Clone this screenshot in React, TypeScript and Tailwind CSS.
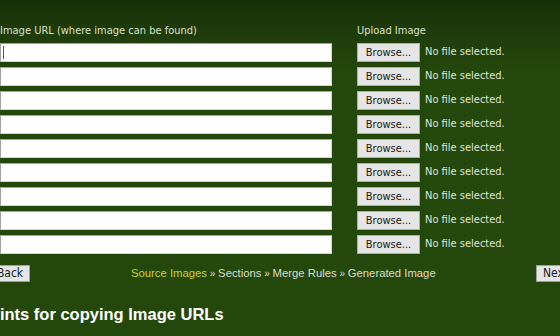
import { useState } from 'react';

const rows = Array.from({ length: 9 }, (_, i) => i);

const App = () => {
  const [urls, setUrls] = useState<string[]>(rows.map(() => ''));

  return (
    <div className="min-h-[336px] w-[560px] overflow-hidden bg-[#24470b] bg-[linear-gradient(to_bottom,#163007_0px,#1d390a_25px,#24470b_70px)] text-[#d8e0c8]">
      <div className="pt-[23px] font-['DejaVu_Sans_Condensed','DejaVu_Sans',sans-serif] text-[12px]">
        <div className="flex text-[11px]">
          <div className="w-[357px] leading-[15px]">Image URL (where image can be found)</div>
          <div className="leading-[15px]">Upload Image</div>
        </div>

        <div className="mt-[5px] flex flex-col gap-[5px]">
          {rows.map((i) => (
            <div key={i} className="flex h-[19px] items-center">
              <div className="relative w-[332px]">
                <input
                  value={urls[i]}
                  onChange={(e) => setUrls(urls.map((u, j) => (j === i ? e.target.value : u)))}
                  className="block h-[19px] w-[332px] border border-t-[#a3a3a3] border-l-[#a3a3a3] border-r-[#d4d4d4] border-b-[#d4d4d4] bg-white px-[2px] text-[12px] text-black outline-none"
                />
                {i === 0 && <span className="absolute left-[3px] top-[3px] h-[13px] w-px bg-[#555]" />}
              </div>
              <button className="ml-[25px] h-[19px] w-[63px] border border-[#acacac] bg-[#e5e5e5] text-[11px] leading-[17px] text-[#1a1a1a]">
                Browse...
              </button>
              <span className="ml-[5px] text-[11px] text-[#dfe5d6]">No file selected.</span>
            </div>
          ))}
        </div>
      </div>

      <div className="mt-[10px] flex h-[18px] items-center font-['Liberation_Sans',Arial,sans-serif] text-[11.3px]">
        <button className="-ml-[10px] h-[17px] w-[40px] border border-[#a0a0a0] bg-[#e5e5e5] font-['DejaVu_Sans_Condensed','DejaVu_Sans',sans-serif] text-[12px] leading-[15px] text-[#1a1a1a]">
          Back
        </button>
        <div className="ml-[101px] text-[#dcdcd0]">
          <span className="text-[#c9d51c]">Source Images</span>
          <span className="text-[10px]"> » </span>Sections
          <span className="text-[10px]"> » </span>Merge Rules
          <span className="text-[10px]"> » </span>Generated Image
        </div>
        <button className="ml-auto -mr-[10px] h-[17px] w-[34px] shrink-0 border border-[#a0a0a0] bg-[#e5e5e5] pl-[6px] text-left font-['DejaVu_Sans_Condensed','DejaVu_Sans',sans-serif] text-[12px] leading-[15px] text-[#1a1a1a]">
          Next
        </button>
      </div>

      <h2 className="-ml-[12px] mt-[22px] font-['Liberation_Sans',Arial,sans-serif] text-[16.5px] font-bold leading-[20px] text-white">
        Hints for copying Image URLs
      </h2>
    </div>
  );
};

export default App;
